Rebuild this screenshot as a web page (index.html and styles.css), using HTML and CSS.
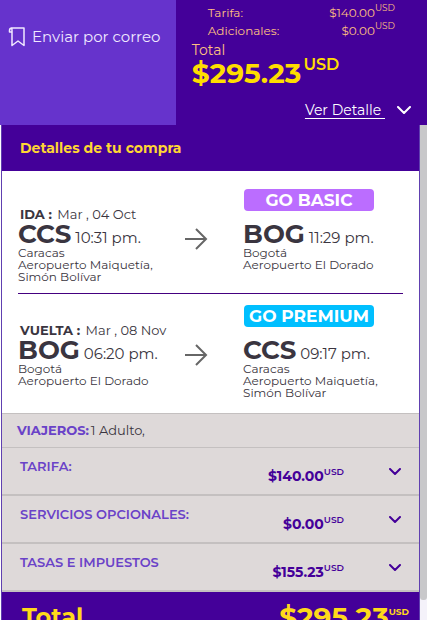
FILE: index.html
```
<!DOCTYPE html>
<html lang="es">
<head>
    <meta charset="UTF-8">
    <meta name="viewport" content="width=device-width, initial-scale=1.0">
    <title>Detalles de tu compra</title>
    <link rel="stylesheet" href="styles.css">
</head>
<body>

    <!-- Top summary -->
    <header class="summary">
        <div class="share">
            <a href="#" class="share-link">
                <svg class="share-icon" width="18" height="20" viewBox="0 0 18 20" fill="none" stroke="currentColor" stroke-width="1.5" stroke-linejoin="round">
                    <path d="M4 5H1.500V3.500C1.500 2 2.500 1 4 1H16V18.500L10 14L4 18.500V3.500C4 2 3.500 1 3 1"/>
                </svg>
                Enviar por correo
            </a>
        </div>
        <div class="totals">
            <dl class="lines">
                <dt>Tarifa:</dt>
                <dd>$140.00<sup>USD</sup></dd>
                <dt>Adicionales:</dt>
                <dd>$0.00<sup>USD</sup></dd>
            </dl>
            <div class="total-label">Total</div>
            <div class="total-price">$295.23<sup>USD</sup></div>
            <div class="more">
                <a href="#detalle">Ver Detalle&nbsp;</a>
                <svg width="14" height="8" viewBox="0 0 14 8" fill="none" stroke="currentColor" stroke-width="2" stroke-linecap="round" stroke-linejoin="round">
                    <path d="M1 1L7 7L13 1"/>
                </svg>
            </div>
        </div>
    </header>

    <!-- Purchase detail -->
    <div class="page">
        <main class="panel" id="detalle">
            <h2 class="panel-title">Detalles de tu compra</h2>

            <section class="flights">
                <div class="flight">
                    <div class="origin">
                        <div class="date"><b>IDA :</b> Mar , 04 Oct</div>
                        <div class="airport"><b>CCS</b> 10:31 pm.</div>
                        <div class="city">Caracas<br>Aeropuerto Maiquetía,<br>Simón Bolívar</div>
                    </div>
                    <svg class="arrow" width="24" height="24" viewBox="0 0 24 24" fill="none" stroke="currentColor" stroke-width="2">
                        <path d="M1 12H22M12 2L22 12L12 22"/>
                    </svg>
                    <div class="destination">
                        <div class="fare basic">GO BASIC</div>
                        <div class="airport"><b>BOG</b> 11:29 pm.</div>
                        <div class="city">Bogotá<br>Aeropuerto El Dorado</div>
                    </div>
                </div>

                <div class="flight">
                    <div class="origin">
                        <div class="date"><b>VUELTA :</b> Mar , 08 Nov</div>
                        <div class="airport"><b>BOG</b> 06:20 pm.</div>
                        <div class="city">Bogotá<br>Aeropuerto El Dorado</div>
                    </div>
                    <svg class="arrow" width="24" height="24" viewBox="0 0 24 24" fill="none" stroke="currentColor" stroke-width="2">
                        <path d="M1 12H22M12 2L22 12L12 22"/>
                    </svg>
                    <div class="destination">
                        <div class="fare premium">GO PREMIUM</div>
                        <div class="airport"><b>CCS</b> 09:17 pm.</div>
                        <div class="city">Caracas<br>Aeropuerto Maiquetía,<br>Simón Bolívar</div>
                    </div>
                </div>
            </section>

            <div class="travelers"><b>VIAJEROS:</b>1 Adulto,</div>

            <button type="button" class="row">
                <span class="row-label">TARIFA:</span>
                <span class="row-price">$140.00<sup>USD</sup></span>
                <svg width="12" height="8" viewBox="0 0 12 8" fill="none" stroke="currentColor" stroke-width="2" stroke-linecap="round" stroke-linejoin="round">
                    <path d="M1 1L6 6L11 1"/>
                </svg>
            </button>
            <button type="button" class="row">
                <span class="row-label">SERVICIOS OPCIONALES:</span>
                <span class="row-price">$0.00<sup>USD</sup></span>
                <svg width="12" height="8" viewBox="0 0 12 8" fill="none" stroke="currentColor" stroke-width="2" stroke-linecap="round" stroke-linejoin="round">
                    <path d="M1 1L6 6L11 1"/>
                </svg>
            </button>
            <button type="button" class="row">
                <span class="row-label">TASAS E IMPUESTOS</span>
                <span class="row-price">$155.23<sup>USD</sup></span>
                <svg width="12" height="8" viewBox="0 0 12 8" fill="none" stroke="currentColor" stroke-width="2" stroke-linecap="round" stroke-linejoin="round">
                    <path d="M1 1L6 6L11 1"/>
                </svg>
            </button>

            <div class="grand-total">
                <span class="grand-label">Total</span>
                <span class="grand-price">$295.23<sup>USD</sup></span>
            </div>
        </main>
        <div class="scroll-track"><div class="scroll-thumb"></div></div>
    </div>

</body>
</html>
```
FILE: styles.css
```
* {
    box-sizing: border-box;
}

body {
    margin: 0;
    height: 100vh;
    display: flex;
    flex-direction: column;
    overflow: hidden;
    background: #fff;
    color: #3a3540;
    font-family: Montserrat, Inter, "Liberation Sans", sans-serif;
}

sup {
    line-height: 0;
    vertical-align: 6px;
    font-size: 10px;
}

/* Top summary */
.summary {
    display: grid;
    grid-template-columns: 7fr 10fr;
    flex-shrink: 0;
    background: #440099;
}

.share {
    background: #6633cc;
    padding: 27px 8px;
}

.share-link {
    display: flex;
    align-items: center;
    gap: 6px;
    color: #f1e9ff;
    font-size: 15px;
    line-height: 20px;
    text-decoration: none;
    white-space: nowrap;
}

.totals {
    padding: 4px 16px 5px;
    color: #ffc080;
}

.lines {
    display: grid;
    grid-template-columns: 1fr auto;
    margin: 0;
    padding: 0 16px;
    font-size: 12px;
    line-height: 18px;
}

.lines dd {
    margin: 0;
    text-align: right;
}

.lines sup {
    font-size: 9px;
}

.total-label {
    font-size: 14px;
    line-height: 20px;
}

.total-price {
    color: #ffdd00;
    font-size: 28px;
    font-weight: 700;
    line-height: 26px;
}

.total-price sup {
    margin-left: 2px;
    vertical-align: 13px;
    font-size: 16px;
    font-weight: 600;
}

.more {
    display: flex;
    justify-content: flex-end;
    align-items: center;
    gap: 12px;
    margin-top: 14px;
    color: #fff;
    font-size: 14px;
    line-height: 20px;
}

.more a {
    color: #fff;
    text-underline-offset: 3px;
}

/* Panel */
.page {
    display: flex;
    flex: 1;
    min-height: 0;
    padding-left: 1px;
    padding-bottom: 2px;
}

.panel {
    flex: 1;
    border-left: 1px solid #6040b0;
    border-right: 1px solid #6040b0;
    overflow: hidden;
}

.scroll-track {
    width: 7px;
    background: #f4f2fa;
}

.scroll-thumb {
    height: 96%;
    background: #c8c8ca;
    border-radius: 0 0 3px 3px;
}

.panel-title {
    margin: 0;
    padding: 13px 18px;
    background: #440099;
    color: #ffd633;
    font-size: 14px;
    font-weight: 700;
    line-height: 20px;
}

/* Flights */
.flights {
    padding: 7px 16px 4px;
}

.flight {
    display: grid;
    grid-template-columns: 1fr 59px 160px;
    padding: 11px 0 10px;
}

.flight + .flight {
    border-top: 1px solid #440080;
}

.origin {
    padding-top: 17px;
}

.date {
    margin-bottom: 1px;
    padding-left: 2px;
    font-size: 13px;
    line-height: 16px;
}

.date b {
    margin-right: 2px;
}

.airport {
    padding-top: 6px;
    font-size: 15px;
    line-height: 18px;
}

.airport b {
    font-size: 26px;
    line-height: 0;
}

.city {
    font-size: 12px;
    line-height: 12px;
}

.arrow {
    margin-top: 38px;
    color: #666;
}

.fare {
    width: 130px;
    margin: 0 0 12px 1px;
    border-radius: 4px;
    color: #fff;
    font-size: 17px;
    font-weight: 700;
    line-height: 22px;
    text-align: center;
}

.basic {
    background: #bb6dff;
}

.premium {
    background: #00bfff;
}

/* Price rows */
.travelers {
    padding: 6px 15px 7px;
    border-top: 1px solid #c4c0c0;
    border-bottom: 1px solid #c4c0c0;
    background: #ded9d9;
    font-size: 13px;
    line-height: 20px;
}

.travelers b {
    margin-right: 2px;
    color: #6a42c8;
}

.row {
    display: flex;
    align-items: flex-start;
    width: 100%;
    padding: 8px 18px;
    border: 0;
    border-bottom: 2px solid #c4c0c0;
    background: #ded9d9;
    color: #440099;
    font-family: inherit;
    text-align: left;
}

.row-label {
    flex: 1;
    color: #6a42c8;
    font-size: 13px;
    font-weight: 600;
    line-height: 20px;
}

.row-price {
    padding-top: 10px;
    font-size: 14px;
    font-weight: 700;
    line-height: 20px;
}

.row-price sup {
    font-size: 9px;
    font-weight: 600;
}

.row svg {
    margin: 12px 0 0 45px;
}

.grand-total {
    display: flex;
    justify-content: space-between;
    padding: 7px 10px 8px 20px;
    background: #440099;
    color: #ffd91a;
    font-size: 24px;
    font-weight: 700;
    line-height: 36px;
}

.grand-price {
    font-size: 28px;
}

.grand-price sup {
    vertical-align: 12px;
    font-size: 9px;
}
```
